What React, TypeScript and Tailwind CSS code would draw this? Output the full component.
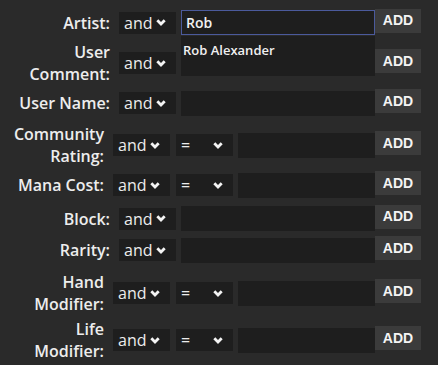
import React from "react";

const Chevron = () => (
  <svg width="10" height="7" viewBox="0 0 10 7" className="shrink-0">
    <path d="M1.3 1.3 L5 5 L8.7 1.3" fill="none" stroke="#f4f4f4" strokeWidth="2.8" />
  </svg>
);

const Select = ({ text }: { text: string }) => (
  <div className="flex h-[22px] w-[57px] shrink-0 items-center justify-between bg-[#1e1e1e] pl-[5px] pr-[10px] text-[16px] leading-[22px] text-[#ececec] [font-family:'Open_Sans',sans-serif]">
    <span>{text}</span>
    <Chevron />
  </div>
);

const AddBtn = () => (
  <div className="mb-[4px] flex h-[24px] w-[46px] shrink-0 items-center justify-center bg-[#3b3b3b] text-[14px] font-bold text-[#f4f4f4] [font-family:'Liberation_Sans',Arial,sans-serif]">
    ADD
  </div>
);

type RowProps = {
  label: React.ReactNode;
  h: string;
  eq?: boolean;
  children?: React.ReactNode;
};

const Row = ({ label, h, eq, children }: RowProps) => (
  <div className={`flex items-center ${h}`}>
    <div
      className={`${eq ? "w-[104px]" : "w-[110px]"} shrink-0 text-right text-[16px] font-semibold leading-[22px] text-[#ededed] [font-family:'Open_Sans',sans-serif]`}
    >
      {label}
    </div>
    <div className="ml-[9px]">
      <Select text="and" />
    </div>
    {eq && (
      <div className="ml-[6px]">
        <Select text="=" />
      </div>
    )}
    <div className="ml-[5px]">
      {children ?? (
        <div className={`h-[25px] ${eq ? "w-[137px]" : "w-[194px]"} bg-[#1e1e1e]`} />
      )}
    </div>
    <AddBtn />
  </div>
);

export default function App() {
  return (
    <div className="h-[365px] w-[438px] overflow-hidden bg-[#2a2a2a] pt-[2px]">
      <Row label="Artist:" h="h-[41px]">
        <div className="relative">
          <div className="flex h-[25px] w-[194px] items-center border border-[#4b5a9c] bg-[#1e1e1e] pl-[4px] text-[14px] font-semibold text-[#f2f2f2] [font-family:'Open_Sans',sans-serif]">
            Rob
          </div>
          <div className="absolute left-0 top-[26px] z-10 h-[40px] w-[194px] bg-[#1e1e1e] pl-[2px] pt-[5px] text-[13px] font-semibold leading-[18px] text-[#f0f0f0] [font-family:'Open_Sans',sans-serif]">
            Rob Alexander
          </div>
        </div>
      </Row>
      <Row
        label={
          <>
            User
            <br />
            Comment:
          </>
        }
        h="h-[40px]"
      />
      <Row label="User Name:" h="h-[40px]" />
      <Row
        label={
          <>
            Community
            <br />
            Rating:
          </>
        }
        h="h-[44px]"
        eq
      />
      <Row label="Mana Cost:" h="h-[36px]" eq />
      <Row label="Block:" h="h-[31px]" />
      <Row label="Rarity:" h="h-[32px]" />
      <Row
        label={
          <>
            Hand
            <br />
            Modifier:
          </>
        }
        h="h-[54px]"
        eq
      />
      <Row
        label={
          <>
            Life
            <br />
            Modifier:
          </>
        }
        h="h-[40px]"
        eq
      />
    </div>
  );
}
